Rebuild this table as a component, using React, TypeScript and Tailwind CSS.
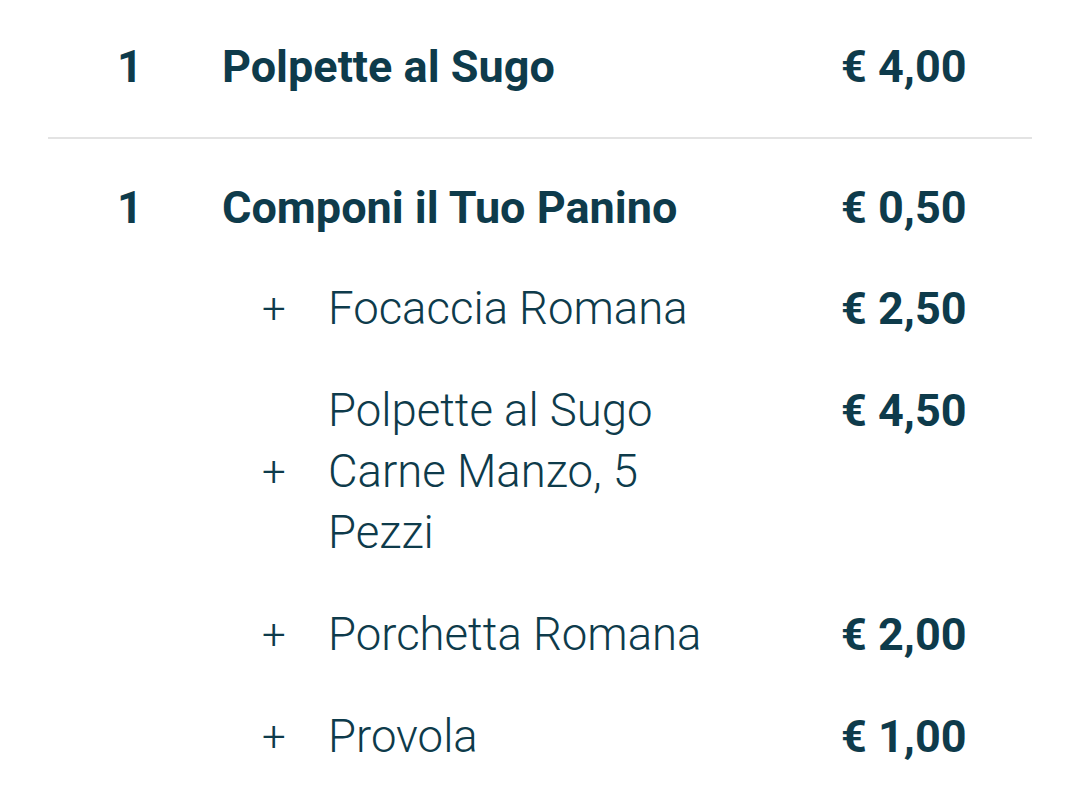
const items = [
  {
    qty: 1,
    name: 'Polpette al Sugo',
    price: '€ 4,00',
    extras: [] as { name: string; price: string }[],
  },
  {
    qty: 1,
    name: 'Componi il Tuo Panino',
    price: '€ 0,50',
    extras: [
      { name: 'Focaccia Romana', price: '€ 2,50' },
      { name: 'Polpette al Sugo Carne Manzo, 5 Pezzi', price: '€ 4,50' },
      { name: 'Porchetta Romana', price: '€ 2,00' },
      { name: 'Provola', price: '€ 1,00' },
    ],
  },
];

export default function App() {
  return (
    <div
      className="min-h-screen bg-white px-[48px] pt-[36px] text-[#0e3b4b]"
      style={{ fontFamily: 'Roboto, "Liberation Sans", sans-serif' }}
    >
      {items.map((item, i) => (
        <div key={i}>
          {i > 0 && <div className="mb-[38px] mt-[40px] h-[2px] bg-[#e3e3e3]" />}
          <div className="flex pl-[69px] pr-[60px] text-[45px] font-bold leading-[61px]">
            <div className="w-[105px] shrink-0">{item.qty}</div>
            <div className="flex-1">{item.name}</div>
            <div className="w-[131px] shrink-0 whitespace-nowrap">{item.price}</div>
          </div>
          {item.extras.length > 0 && (
            <div className="mt-[40px] flex flex-col gap-[41px]">
              {item.extras.map((ex, j) => (
                <div key={j} className="flex pl-[214px] pr-[60px] leading-[61px]">
                  <div className="flex w-[66px] shrink-0 items-center text-[42px] font-light">+</div>
                  <div className="w-[400px] shrink-0 text-[45.5px] font-light">{ex.name}</div>
                  <div className="flex-1" />
                  <div className="w-[131px] shrink-0 whitespace-nowrap text-[45px] font-bold">{ex.price}</div>
                </div>
              ))}
            </div>
          )}
        </div>
      ))}
    </div>
  );
}
